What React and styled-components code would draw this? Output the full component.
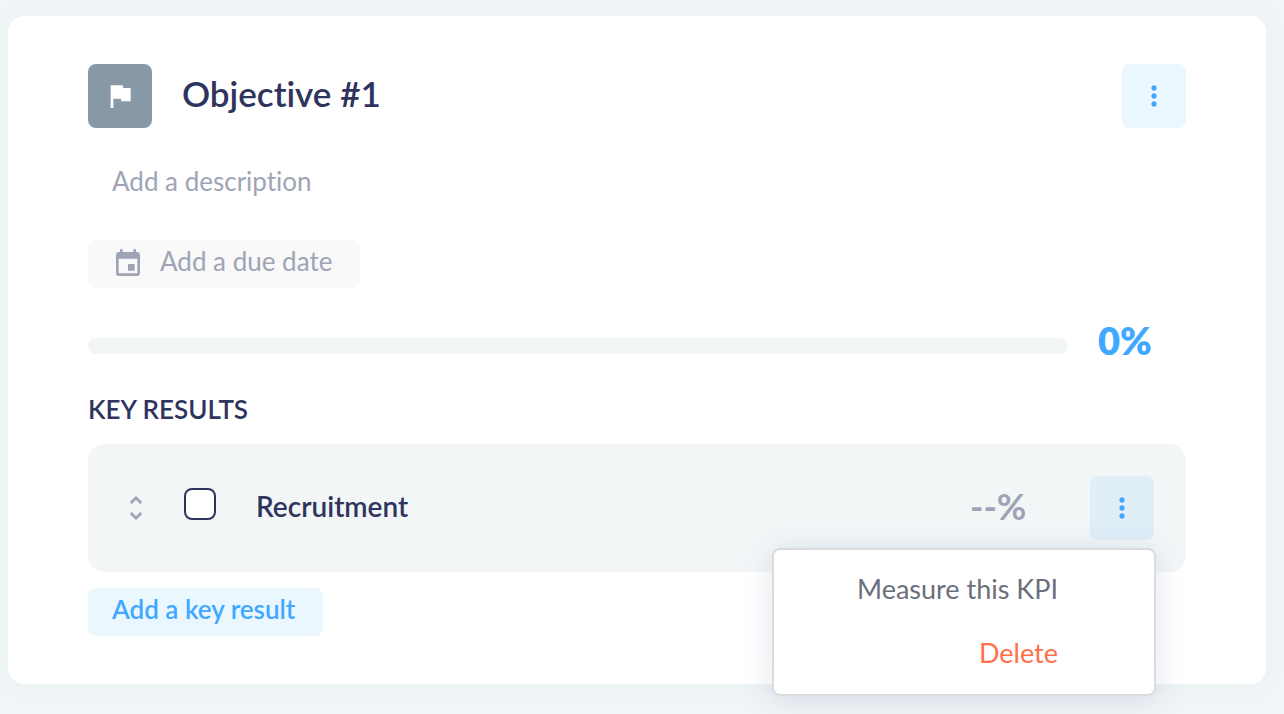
import { useState } from "react";
import styled, { createGlobalStyle } from "styled-components";
import { MdEvent, MdFlag, MdMoreVert, MdUnfoldMore } from "react-icons/md";

const App = () => {
  const [description, setDescription] = useState("");
  const [done, setDone] = useState(false);
  const [menuOpen, setMenuOpen] = useState(true);
  const progress = 0;

  return (
    <Page>
      <GlobalStyle />
      <Card>
        <Header>
          <FlagBadge>
            <MdFlag size={32} />
          </FlagBadge>
          <Title>Objective #1</Title>
          <IconButton aria-label="Objective options">
            <MdMoreVert size={32} />
          </IconButton>
        </Header>
        <Description
          aria-label="Description"
          placeholder="Add a description"
          value={description}
          onChange={ev => setDescription(ev.target.value)}
        />
        <DueDateButton>
          <MdEvent size={32} />
          Add a due date
        </DueDateButton>
        <ProgressRow>
          <Track>
            <Bar style={{ width: `${progress}%` }} />
          </Track>
          <Percent>{progress}%</Percent>
        </ProgressRow>
        <SectionTitle>KEY RESULTS</SectionTitle>
        <KeyResult>
          <DragHandle>
            <MdUnfoldMore size={32} />
          </DragHandle>
          <Checkbox
            id="recruitment"
            type="checkbox"
            checked={done}
            onChange={ev => setDone(ev.target.checked)}
          />
          <Name htmlFor="recruitment">Recruitment</Name>
          <Percent $muted>--%</Percent>
          <MenuAnchor>
            <IconButton
              $active
              aria-label="Key result options"
              aria-expanded={menuOpen}
              onClick={() => setMenuOpen(!menuOpen)}
            >
              <MdMoreVert size={32} />
            </IconButton>
            {menuOpen && (
              <Menu>
                <MenuItem>Measure this KPI</MenuItem>
                <MenuItem $danger>Delete</MenuItem>
              </Menu>
            )}
          </MenuAnchor>
        </KeyResult>
        <AddButton>Add a key result</AddButton>
      </Card>
    </Page>
  );
};

const GlobalStyle = createGlobalStyle`
  *, *::before, *::after {
    box-sizing: border-box;
  }
  body {
    margin: 0;
    background: #f1f5f7;
    font-family: Lato, sans-serif;
    font-variant-ligatures: none;
    color: #2f345e;
  }
  button, input {
    font: inherit;
    font-variant-ligatures: none;
  }
`;
const Page = styled.main`
  min-height: 100vh;
  padding: 16px 18px 30px 8px;
`;
const Card = styled.article`
  display: flex;
  flex-direction: column;
  align-items: flex-start;
  padding: 48px 80px;
  background: white;
  border-radius: 16px;
  box-shadow: 0 0 32px hsla(210, 30%, 50%, 0.04);
`;
const Header = styled.header`
  display: flex;
  align-items: center;
  width: 100%;
`;
const FlagBadge = styled.span`
  display: grid;
  place-items: center;
  width: 64px;
  height: 64px;
  border-radius: 8px;
  background: #8798a7;
  color: white;
`;
const Title = styled.h1`
  flex: 1;
  margin: 0 30px;
  padding-bottom: 6px;
  font-size: 35px;
  line-height: 44px;
  font-weight: 600;
`;
const UnstyledButton = styled.button`
  border: none;
  padding: 0;
  background: transparent;
  cursor: pointer;
`;
const IconButton = styled(UnstyledButton)`
  display: grid;
  place-items: center;
  width: 64px;
  height: 64px;
  border-radius: 8px;
  color: #40a9ff;
  background: ${p => (p.$active ? "#e0eef8" : "#ebf7ff")};
`;
const Description = styled.input`
  width: 100%;
  height: 48px;
  margin-top: 32px;
  padding: 0 24px 6px;
  border: none;
  outline: none;
  background: transparent;
  color: #2f345e;
  font-size: 26px;
  &::placeholder {
    color: #9ea4b5;
    opacity: 1;
  }
`;
const ChipButton = styled(UnstyledButton)`
  display: flex;
  align-items: center;
  gap: 16px;
  height: 48px;
  padding: 0 28px 6px 24px;
  border-radius: 8px;
  font-size: 26px;
`;
const DueDateButton = styled(ChipButton)`
  margin-top: 32px;
  background: #f9f9f9;
  color: #9ea4b5;
  & svg {
    margin-top: 6px;
  }
`;
const ProgressRow = styled.div`
  display: flex;
  align-items: center;
  gap: 30px;
  width: 100%;
  margin-top: 32px;
`;
const Track = styled.div`
  flex: 1;
  height: 16px;
  margin-top: 8px;
  border-radius: 8px;
  background: #f2f6f7;
  overflow: hidden;
`;
const Bar = styled.div`
  height: 100%;
  background: #40a9ff;
`;
const Percent = styled.span`
  width: 88px;
  padding-bottom: 4px;
  font-size: ${p => (p.$muted ? "36px" : "38px")};
  line-height: 40px;
  font-weight: ${p => (p.$muted ? 700 : 800)};
  color: ${p => (p.$muted ? "#9ea4b5" : "#40a9ff")};
`;
const SectionTitle = styled.h2`
  margin: 27px 0 17px;
  font-size: 26px;
  line-height: 36px;
  font-weight: 600;
`;
const KeyResult = styled.section`
  display: flex;
  align-items: center;
  gap: 32px;
  width: 100%;
  padding: 32px;
  border-radius: 16px;
  background: #f2f6f7;
`;
const DragHandle = styled.span`
  display: flex;
  color: #9ea4b5;
`;
const Checkbox = styled.input`
  appearance: none;
  width: 32px;
  height: 32px;
  margin: 0 8px 8px 0;
  border: 2px solid #2f345e;
  border-radius: 8px;
  background: white;
  &:checked {
    background: #2f345e;
  }
`;
const Name = styled.label`
  flex: 1;
  padding-bottom: 4px;
  font-size: 28px;
  line-height: 32px;
  font-weight: 600;
`;
const MenuAnchor = styled.div`
  position: relative;
`;
const Menu = styled.div`
  position: absolute;
  top: 72px;
  right: -2px;
  z-index: 1;
  width: 384px;
  padding: 8px 0;
  border: 2px solid #dbdbdd;
  border-radius: 8px;
  background: white;
  box-shadow: 0 4px 32px hsla(220, 35%, 40%, 0.16);
`;
const MenuItem = styled(UnstyledButton)`
  display: block;
  width: 100%;
  height: 64px;
  padding: 0 96px 4px 24px;
  text-align: right;
  font-size: 27px;
  color: ${p => (p.$danger ? "#ff7048" : "#6c6f7c")};
`;
const AddButton = styled(ChipButton)`
  margin-top: 16px;
  background: #ebf7ff;
  color: #40a9ff;
  font-weight: 600;
`;
export default App;
